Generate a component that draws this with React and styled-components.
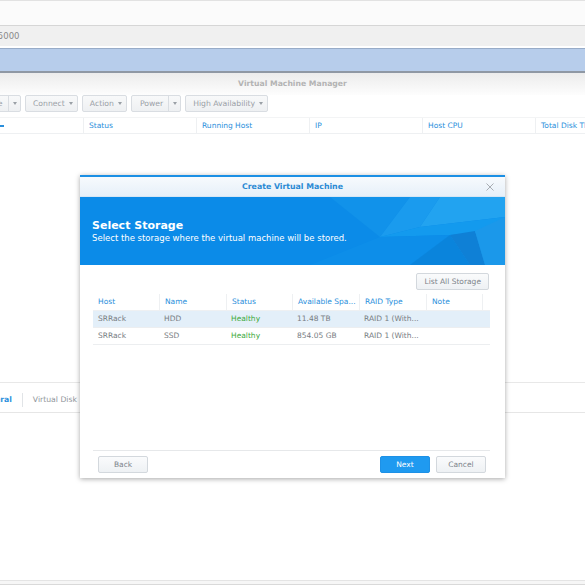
import React from "react";
import styled, { createGlobalStyle } from "styled-components";

const Global = createGlobalStyle`
  html, body { margin: 0; padding: 0; background: #fff; }
  body { font-family: "DejaVu Sans", Verdana, sans-serif; }
  * { box-sizing: border-box; }
`;

const Page = styled.div`
  position: relative;
  width: 585px;
  height: 585px;
  overflow: hidden;
  background: #fff;
  display: flex;
  flex-direction: column;
`;

const BrowserTop = styled.div`
  height: 26px;
  background: #fbfbfb;
  border-top: 1px solid #e2e2e2;
  border-bottom: 1px solid #d6d6d6;
`;

const AddressBar = styled.div`
  height: 20px;
  background: #f0f0f0;
  color: #8a8a8a;
  font-size: 8.5px;
  line-height: 20px;
  margin-left: -5px;
`;

const Gap = styled.div`
  height: ${(p) => p.h}px;
  background: ${(p) => p.bg || "#fff"};
`;

const BlueBand = styled.div`
  height: 25px;
  background: #b7cdeb;
  border-top: 1px solid #98acc8;
  border-bottom: 2px solid #8f98a4;
`;

const WinTitle = styled.div`
  height: 22px;
  background: linear-gradient(#ececec, #fdfdfd);
  text-align: center;
  color: #b3b3b3;
  font-weight: bold;
  font-size: 7.7px;
  line-height: 22px;
`;

const Toolbar = styled.div`
  display: flex;
  gap: 4px;
  margin-left: -32px;
  height: 22px;
  align-items: flex-start;
`;

const Btn = styled.div`
  display: flex;
  height: 17px;
  border: 1px solid #d9dde2;
  border-radius: 2px;
  background: linear-gradient(#f8f9fa, #eef0f2);
  color: #9aa0a6;
  font-size: 7.7px;
  line-height: 15px;
`;

const BtnPart = styled.div`
  padding: 0 ${(p) => p.pr ?? 4}px 0 ${(p) => p.pl ?? 7}px;
  width: ${(p) => (p.w ? p.w + "px" : "auto")};
  display: flex;
  align-items: center;
  justify-content: ${(p) => (p.split ? "center" : "flex-start")};
  gap: 4px;
  border-left: ${(p) => (p.split ? "1px solid #d9dde2" : "none")};
  white-space: nowrap;
`;

const Caret = styled.span`
  display: inline-block;
  width: 0;
  height: 0;
  border-left: 2.5px solid transparent;
  border-right: 2.5px solid transparent;
  border-top: 3px solid #9aa0a6;
`;

const GridHeader = styled.div`
  display: grid;
  grid-template-columns: 83px 113px 113px 113px 113px 1fr;
  height: 17px;
  border-bottom: 1px solid #eef0f2;
  border-top: 1px solid #f3f4f5;
`;

const HeadCell = styled.div`
  color: #2a8fdc;
  font-size: 7.5px;
  line-height: 15px;
  padding-left: 5px;
  border-left: ${(p) => (p.first ? "none" : "1px solid #eef0f2")};
  white-space: nowrap;
  overflow: hidden;
`;

const SortMark = styled.span`
  display: inline-block;
  width: 4px;
  height: 1.5px;
  background: #2a8fdc;
  margin-left: -5px;
  vertical-align: middle;
`;

const ListArea = styled.div`
  height: 248px;
`;

const BottomPanel = styled.div`
  border-top: 1px solid #e8e8e8;
  height: 31px;
  display: flex;
  align-items: center;
  padding-top: 5px;
  border-bottom: 1px solid #e6e6e6;
`;

const Tab = styled.div`
  font-size: 7.7px;
  padding: 0 10px;
  color: ${(p) => (p.active ? "#2a8fdc" : "#8f959b")};
  font-weight: ${(p) => (p.active ? "bold" : "normal")};
  border-left: ${(p) => (p.sep ? "1px solid #e1e4e7" : "none")};
  line-height: 14px;
  margin-left: ${(p) => p.ml || 0}px;
  white-space: nowrap;
`;

const Fill = styled.div`
  flex: 1;
`;

const FooterLine = styled.div`
  height: 5px;
  border-top: 1px solid #e4e4e4;
  border-bottom: 1px solid #d9d9d9;
  background: #f6f6f6;
`;

/* Dialog */
const Dialog = styled.div`
  position: absolute;
  left: 80px;
  top: 175px;
  width: 425px;
  height: 303px;
  background: #fff;
  border-top: 2px solid #1b8fe4;
  box-shadow: 0 1px 5px rgba(0, 0, 0, 0.35);
  display: flex;
  flex-direction: column;
`;

const DlgTitle = styled.div`
  position: relative;
  height: 20px;
  background: linear-gradient(#f7fafd, #e6f0f9);
  text-align: center;
  color: #2b8ad4;
  font-weight: bold;
  font-size: 7.8px;
  line-height: 19px;
  border-bottom: 1px solid #d6e6f4;
`;

const Close = styled.svg`
  position: absolute;
  right: 11px;
  top: 6px;
`;

const Banner = styled.div`
  position: relative;
  height: 68px;
  background: #0b8be8;
  overflow: hidden;
  color: #fff;
  padding: 22px 0 0 12px;
`;

const BannerArt = styled.svg`
  position: absolute;
  left: 0;
  top: 0;
`;

const BannerTitle = styled.div`
  position: relative;
  font-size: 11px;
  font-weight: bold;
  line-height: 13px;
`;

const BannerSub = styled.div`
  position: relative;
  font-size: 8.5px;
  line-height: 12px;
`;

const Body = styled.div`
  flex: 1;
  padding: 8px 15px 0 13px;
  display: flex;
  flex-direction: column;
`;

const BodyTop = styled.div`
  display: flex;
  justify-content: flex-end;
  height: 21px;
  padding-right: 1px;
`;

const GrayBtn = styled.div`
  height: 17px;
  padding: 0 ${(p) => p.pad || 8}px;
  width: ${(p) => (p.w ? p.w + "px" : "auto")};
  border: 1px solid #d3d8dd;
  border-radius: 2px;
  background: linear-gradient(#fafbfc, #eef1f4);
  color: #7c838a;
  font-size: 7.5px;
  line-height: 15px;
  text-align: center;
  white-space: nowrap;
`;

const BlueBtn = styled(GrayBtn)`
  border-color: #1e91e6;
  background: #1f9af0;
  color: #fff;
`;

const Table = styled.div`
  width: 397px;
`;

const Row = styled.div`
  display: grid;
  grid-template-columns: 66px 67px 66px 67px 67px 56px 1fr;
  height: 17px;
  background: ${(p) => (p.sel ? "#e3eff9" : "transparent")};
  border-bottom: 1px solid ${(p) => (p.head ? "#eef0f2" : "#eceef0")};
`;

const Cell = styled.div`
  font-size: 7.5px;
  line-height: 16px;
  padding-left: 5px;
  white-space: nowrap;
  overflow: hidden;
  color: ${(p) => (p.head ? "#2a8fdc" : p.ok ? "#3caa3c" : "#777c82")};
  border-left: ${(p) => (p.head && !p.first ? "1px solid #eef0f2" : "none")};
`;

const DlgFooter = styled.div`
  margin: 0 15px 0 13px;
  border-top: 1px solid #e6e8ea;
  height: 28px;
  display: flex;
  align-items: flex-start;
  padding: 5px 4px 0 5px;
  gap: 6px;
`;

const caret = <Caret />;

export default function App() {
  const cols = ["Host", "Name", "Status", "Available Spa...", "RAID Type", "Note", ""];
  const rows = [
    ["SRRack", "HDD", "Healthy", "11.48 TB", "RAID 1 (With...", "", ""],
    ["SRRack", "SSD", "Healthy", "854.05 GB", "RAID 1 (With...", "", ""],
  ];
  return (
    <Page>
      <Global />
      <BrowserTop />
      <AddressBar>:5000</AddressBar>
      <Gap h={2} />
      <BlueBand />
      <WinTitle>Virtual Machine Manager</WinTitle>
      <Toolbar>
        <Btn>
          <BtnPart w={39} pl={8} pr={3}>Create</BtnPart>
          <BtnPart split w={12} pl={0} pr={0}>{caret}</BtnPart>
        </Btn>
        <Btn>
          <BtnPart>Connect {caret}</BtnPart>
        </Btn>
        <Btn>
          <BtnPart>Action {caret}</BtnPart>
        </Btn>
        <Btn>
          <BtnPart pl={8} pr={5}>Power</BtnPart>
          <BtnPart split w={12} pl={0} pr={0}>{caret}</BtnPart>
        </Btn>
        <Btn>
          <BtnPart>High Availability {caret}</BtnPart>
        </Btn>
      </Toolbar>
      <GridHeader>
        <HeadCell first>
          <SortMark />
        </HeadCell>
        <HeadCell>Status</HeadCell>
        <HeadCell>Running Host</HeadCell>
        <HeadCell>IP</HeadCell>
        <HeadCell>Host CPU</HeadCell>
        <HeadCell>Total Disk Throughput</HeadCell>
      </GridHeader>
      <ListArea />
      <BottomPanel>
        <Tab active ml={-32}>General</Tab>
        <Tab sep>Virtual Disk</Tab>
      </BottomPanel>
      <Fill />
      <FooterLine />

      <Dialog>
        <DlgTitle>
          Create Virtual Machine
          <Close width="8" height="8" viewBox="0 0 8 8">
            <path d="M0.5 0.5 L7.5 7.5 M7.5 0.5 L0.5 7.5" stroke="#a8adb3" strokeWidth="1" />
          </Close>
        </DlgTitle>
        <Banner>
          <BannerArt width="425" height="68" viewBox="0 0 425 68">
            <polygon points="250,0 330,0 300,40" fill="#1192ea" />
            <polygon points="300,40 330,0 360,0 340,30" fill="#1a9bee" />
            <polygon points="340,30 360,0 425,0 425,20" fill="#22a3f0" />
            <polygon points="300,40 340,30 425,20 425,35 370,38" fill="#139aee" />
            <polygon points="230,68 300,40 370,38 330,68" fill="#0d8ee9" />
            <polygon points="330,68 370,38 390,68" fill="#0a84dc" />
            <polygon points="370,38 425,35 425,68 390,68" fill="#168fe2" />
            <polygon points="370,38 395,34 405,68 390,68" fill="#0f80d6" />
            <polygon points="395,34 425,20 425,68 405,68" fill="#1b98ea" />
          </BannerArt>
          <BannerTitle>Select Storage</BannerTitle>
          <BannerSub>Select the storage where the virtual machine will be stored.</BannerSub>
        </Banner>
        <Body>
          <BodyTop>
            <GrayBtn pad={7}>List All Storage</GrayBtn>
          </BodyTop>
          <Table>
            <Row head>
              {cols.map((c, i) => (
                <Cell head first={i === 0} key={i}>
                  {c}
                </Cell>
              ))}
            </Row>
            {rows.map((r, ri) => (
              <Row key={ri} sel={ri === 0}>
                {r.map((c, i) => (
                  <Cell key={i} ok={i === 2}>
                    {c}
                  </Cell>
                ))}
              </Row>
            ))}
          </Table>
          <Fill />
        </Body>
        <DlgFooter>
          <GrayBtn w={50}>Back</GrayBtn>
          <Fill />
          <BlueBtn w={50}>Next</BlueBtn>
          <GrayBtn w={50}>Cancel</GrayBtn>
        </DlgFooter>
      </Dialog>
    </Page>
  );
}
